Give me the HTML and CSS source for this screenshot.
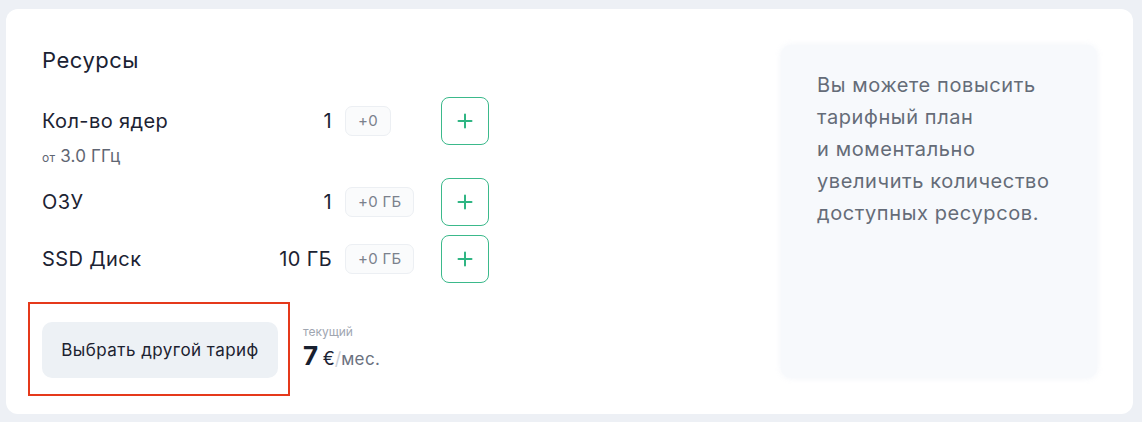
FILE: index.html
```html
<!DOCTYPE html>
<html lang="ru">
<head>
<meta charset="utf-8">
<link rel="stylesheet" href="styles.css">
</head>
<body>
<div class="card">
  <div class="main">
    <h2 class="title">Ресурсы</h2>
    <div class="rows">
      <div class="row">
        <div class="label">Кол-во ядер</div>
        <div class="value">1</div>
        <div class="badge">+0</div>
        <button class="plus" aria-label="Добавить"><svg width="16" height="16" viewBox="0 0 16 16"><path d="M8 1.5v13M1.5 8h13" stroke="currentColor" stroke-width="2" stroke-linecap="round"/></svg></button>
        <div class="sub"><span class="sub-small">от</span> 3.0 ГГц</div>
      </div>
      <div class="row">
        <div class="label">ОЗУ</div>
        <div class="value">1</div>
        <div class="badge">+0 ГБ</div>
        <button class="plus" aria-label="Добавить"><svg width="16" height="16" viewBox="0 0 16 16"><path d="M8 1.5v13M1.5 8h13" stroke="currentColor" stroke-width="2" stroke-linecap="round"/></svg></button>
      </div>
      <div class="row">
        <div class="label">SSD Диск</div>
        <div class="value">10 ГБ</div>
        <div class="badge">+0 ГБ</div>
        <button class="plus" aria-label="Добавить"><svg width="16" height="16" viewBox="0 0 16 16"><path d="M8 1.5v13M1.5 8h13" stroke="currentColor" stroke-width="2" stroke-linecap="round"/></svg></button>
      </div>
    </div>
    <div class="footer">
      <div class="highlight">
        <button class="change">Выбрать другой тариф</button>
      </div>
      <div class="price">
        <div class="price-label">текущий</div>
        <div class="price-value"><span class="amount">7</span> <span class="cur">€</span><span class="slash">/</span><span class="per">мес.</span></div>
      </div>
    </div>
  </div>
  <aside class="info">
    <p>Вы можете повысить<br>тарифный план<br>и моментально<br>увеличить количество<br>доступных ресурсов.</p>
  </aside>
</div>
</body>
</html>
```
FILE: styles.css
```css
* { box-sizing: border-box; }
html, body { margin: 0; }
body {
  background: #edf0f5;
  padding: 9px 9px 8px 6px;
  font-family: Inter, "Noto Sans", sans-serif;
  color: #1c2333;
}
.card {
  background: #fff;
  border-radius: 12px;
  padding: 36px 36px 18px 36px;
  display: flex;
  height: 405px;
}
.main { flex: 1; display: flex; flex-direction: column; }
.title {
  margin: 0;
  font-size: 22px;
  letter-spacing: 0.5px;
  font-weight: 400;
  line-height: 30px;
  color: #1a2233;
}
.rows {
  margin-top: 22px;
  width: 447px;
  display: flex;
  flex-direction: column;
  gap: 9px;
}
.row {
  display: grid;
  grid-template-columns: 1fr auto 83px 48px;
  grid-template-rows: 48px auto;
  column-gap: 13px;
  align-items: center;
}
.label { font-size: 20px; letter-spacing: 0.4px; color: #1c2333; }
.value { font-size: 20px; letter-spacing: 0.4px; color: #1c2333; text-align: right; }
.badge {
  justify-self: start;
  height: 30px;
  line-height: 28px;
  padding: 0 12px;
  border: 1px solid #eceff3;
  background: #fafbfc;
  border-radius: 7px;
  font-size: 15px;
  letter-spacing: 0.3px;
  color: #7b818d;
}
.plus {
  width: 48px;
  height: 48px;
  border: 1px solid #3bb98b;
  border-radius: 8px;
  background: #fff;
  color: #2fb583;
  display: flex;
  align-items: center;
  justify-content: center;
  padding: 0;
}
.sub {
  grid-column: 1;
  line-height: 22px;
  font-size: 17px;
  letter-spacing: 0.2px;
  color: #5f6673;
}
.sub-small { font-size: 12px; }
.footer {
  margin-top: 19px;
  display: flex;
  align-items: center;
  gap: 13px;
}
.highlight {
  margin-left: -14px;
  border: 2px solid #e5391b;
  padding: 18px 10px 16px 12px;
}
.change {
  width: 236px;
  height: 56px;
  border: none;
  border-radius: 10px;
  background: #edf1f5;
  font-family: Inter, "Noto Sans", sans-serif;
  font-size: 17px;
  letter-spacing: 0.45px;
  color: #1c2230;
  padding: 0;
}
.price { display: flex; flex-direction: column; }
.price-label { font-size: 12px; color: #a0a6b1; line-height: 16px; }
.price-value { line-height: 30px; margin-top: 1px; }
.amount { font-size: 26px; font-weight: 700; color: #18202f; }
.cur { font-size: 18px; color: #1c2333; }
.slash { font-size: 18px; color: #cdd1d8; }
.per { font-size: 17px; letter-spacing: 0.4px; color: #6b7280; }
.info {
  width: 316px;
  margin-bottom: 18px;
  background: #f7f9fc;
  border-radius: 10px;
  padding: 24px 36px;
  box-shadow: 0 0 6px rgba(240, 243, 248, 0.9);
}
.info p {
  margin: 0;
  font-size: 20px;
  letter-spacing: 0.6px;
  line-height: 32px;
  color: #656c78;
}
```
